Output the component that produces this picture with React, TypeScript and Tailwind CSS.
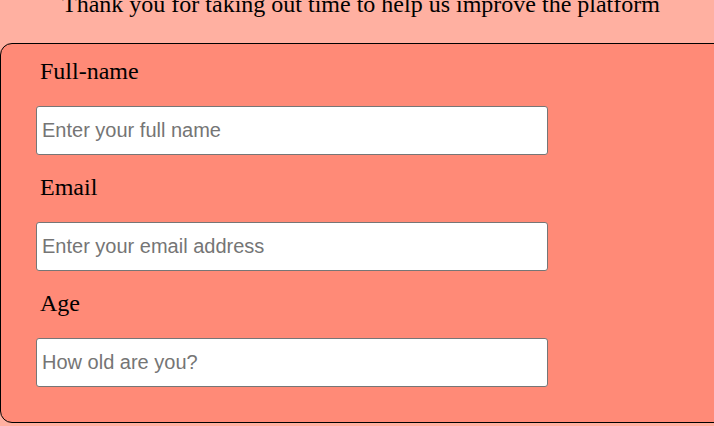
import React from "react";

export default function App() {
  const fields = [
    { label: "Full-name", ph: "Enter your full name" },
    { label: "Email", ph: "Enter your email address" },
    { label: "Age", ph: "How old are you?" },
  ];
  return (
    <div className="w-[714px] h-[426px] overflow-hidden bg-[#ffb0a1]" style={{ fontFamily: '"Liberation Serif", serif' }}>
      <p className="-mt-[9px] text-center text-[24px] leading-[27px] text-black pl-[8px]">
        Thank you for taking out time to help us improve the platform
      </p>
      <div className="mt-[25px] w-[740px] h-[380px] bg-[#ff8a77] border border-black rounded-[12px] pt-[14px] pl-[35px] flex flex-col">
        {fields.map((f, i) => (
          <div key={i} className={i > 0 ? "mt-[19px] flex flex-col" : "flex flex-col"}>
            <label className="pl-[4px] text-[24px] leading-[27px] text-black">{f.label}</label>
            <input
              placeholder={f.ph}
              className="mt-[21px] w-[512px] h-[49px] bg-white border border-[#767676] rounded-[3px] pl-[5px] text-[20px] placeholder:text-[#757575] outline-none"
              style={{ fontFamily: '"Liberation Sans", Arial, sans-serif' }}
            />
          </div>
        ))}
      </div>
    </div>
  );
}
